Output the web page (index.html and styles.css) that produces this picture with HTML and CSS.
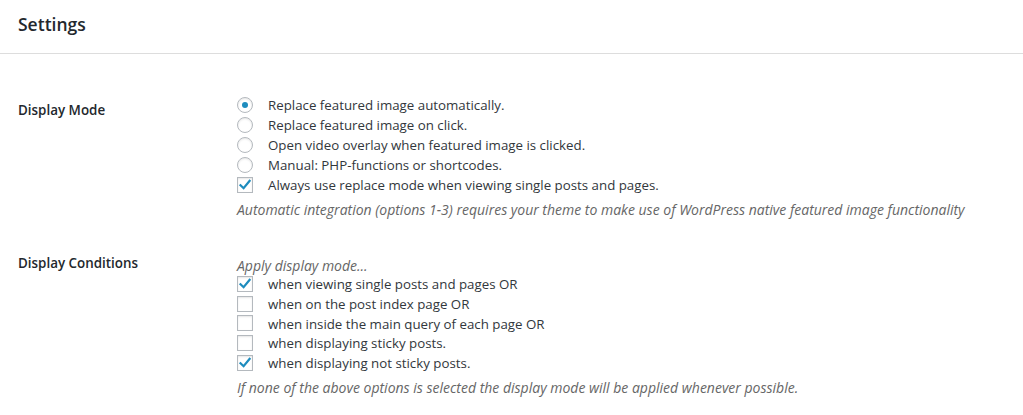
FILE: index.html
```html
<!DOCTYPE html>
<html>
<head>
<meta charset="utf-8">
<link rel="stylesheet" href="styles.css">
</head>
<body>
<header class="page-header"><h1 class="title">Settings</h1></header>
<main class="form">
  <section class="row row-mode">
    <div class="label">Display Mode</div>
    <div class="field">
      <div class="opt"><span class="radio on"></span><span class="txt">Replace featured image automatically.</span></div>
      <div class="opt"><span class="radio"></span><span class="txt">Replace featured image on click.</span></div>
      <div class="opt"><span class="radio"></span><span class="txt">Open video overlay when featured image is clicked.</span></div>
      <div class="opt"><span class="radio"></span><span class="txt">Manual: PHP-functions or shortcodes.</span></div>
      <div class="opt"><span class="check on"><svg viewBox="0 0 16 16" width="16" height="16"><path d="M3.5 8.2 L6.6 11.2 L12.6 3.8" fill="none" stroke="#1e8cbe" stroke-width="2.2" stroke-linecap="square"/></svg></span><span class="txt">Always use replace mode when viewing single posts and pages.</span></div>
      <p class="desc desc-mode">Automatic integration (options 1-3) requires your theme to make use of WordPress native featured image functionality</p>
    </div>
  </section>
  <section class="row row-cond">
    <div class="label">Display Conditions</div>
    <div class="field">
      <p class="intro">Apply display mode...</p>
      <div class="opt"><span class="check on"><svg viewBox="0 0 16 16" width="16" height="16"><path d="M3.5 8.2 L6.6 11.2 L12.6 3.8" fill="none" stroke="#1e8cbe" stroke-width="2.2" stroke-linecap="square"/></svg></span><span class="txt">when viewing single posts and pages OR</span></div>
      <div class="opt"><span class="check"></span><span class="txt">when on the post index page OR</span></div>
      <div class="opt"><span class="check"></span><span class="txt">when inside the main query of each page OR</span></div>
      <div class="opt"><span class="check"></span><span class="txt">when displaying sticky posts.</span></div>
      <div class="opt"><span class="check on"><svg viewBox="0 0 16 16" width="16" height="16"><path d="M3.5 8.2 L6.6 11.2 L12.6 3.8" fill="none" stroke="#1e8cbe" stroke-width="2.2" stroke-linecap="square"/></svg></span><span class="txt">when displaying not sticky posts.</span></div>
      <p class="desc desc-cond">If none of the above options is selected the display mode will be applied whenever possible.</p>
    </div>
  </section>
</main>
</body>
</html>
```
FILE: styles.css
```css
* { box-sizing: border-box; }
body {
  margin: 0;
  background: #fff;
  color: #444;
  font-family: "Open Sans", "Noto Sans", sans-serif;
  font-size: 13px;
}
.page-header {
  height: 54px;
  border-bottom: 1px solid #ddd;
  padding: 0 0 0 18px;
  display: flex;
  align-items: center;
}
.title {
  margin: 0;
  font-size: 17.5px;
  font-weight: 600;
  color: #23282d;
  position: relative;
  top: -3px;
}
.form {
  padding-top: 37px;
}
.row {
  display: flex;
}
.row-cond { margin-top: 31px; }
.label {
  width: 220px;
  padding-left: 18px;
  font-weight: 600;
  color: #23282d;
  font-size: 13.4px;
  line-height: 20px;
  padding-top: 9px;
}
.row-cond .label { padding-top: 2px; }
.field {
  padding-left: 17px;
  padding-top: 4px;
}
.opt {
  display: flex;
  align-items: center;
  height: 20px;
}
.row-cond .opt { height: 19.8px; }
.txt {
  line-height: 20px;
  color: #32373c;
  font-size: 13.3px;
}
.radio, .check {
  width: 16px;
  height: 16px;
  border: 1px solid #b4b9be;
  background: #fff;
  box-shadow: inset 0 1px 2px rgba(0,0,0,.1);
  margin-right: 15px;
  flex: none;
  display: flex;
  align-items: center;
  justify-content: center;
}
.radio { border-radius: 50%; }
.radio.on::after {
  content: "";
  width: 6px;
  height: 6px;
  border-radius: 50%;
  background: #1e8cbe;
}
.check svg { display: block; margin: -1px; }
.desc {
  margin: 0;
  font-style: italic;
  color: #666;
  line-height: 20px;
  font-size: 14px;
}
.desc-mode { margin-top: 5px; }
.desc-cond { margin-top: 5px; }
.intro {
  margin: 0;
  font-style: italic;
  color: #666;
  line-height: 19px;
  font-size: 14px;
  position: relative;
  top: 1px;
}
```
